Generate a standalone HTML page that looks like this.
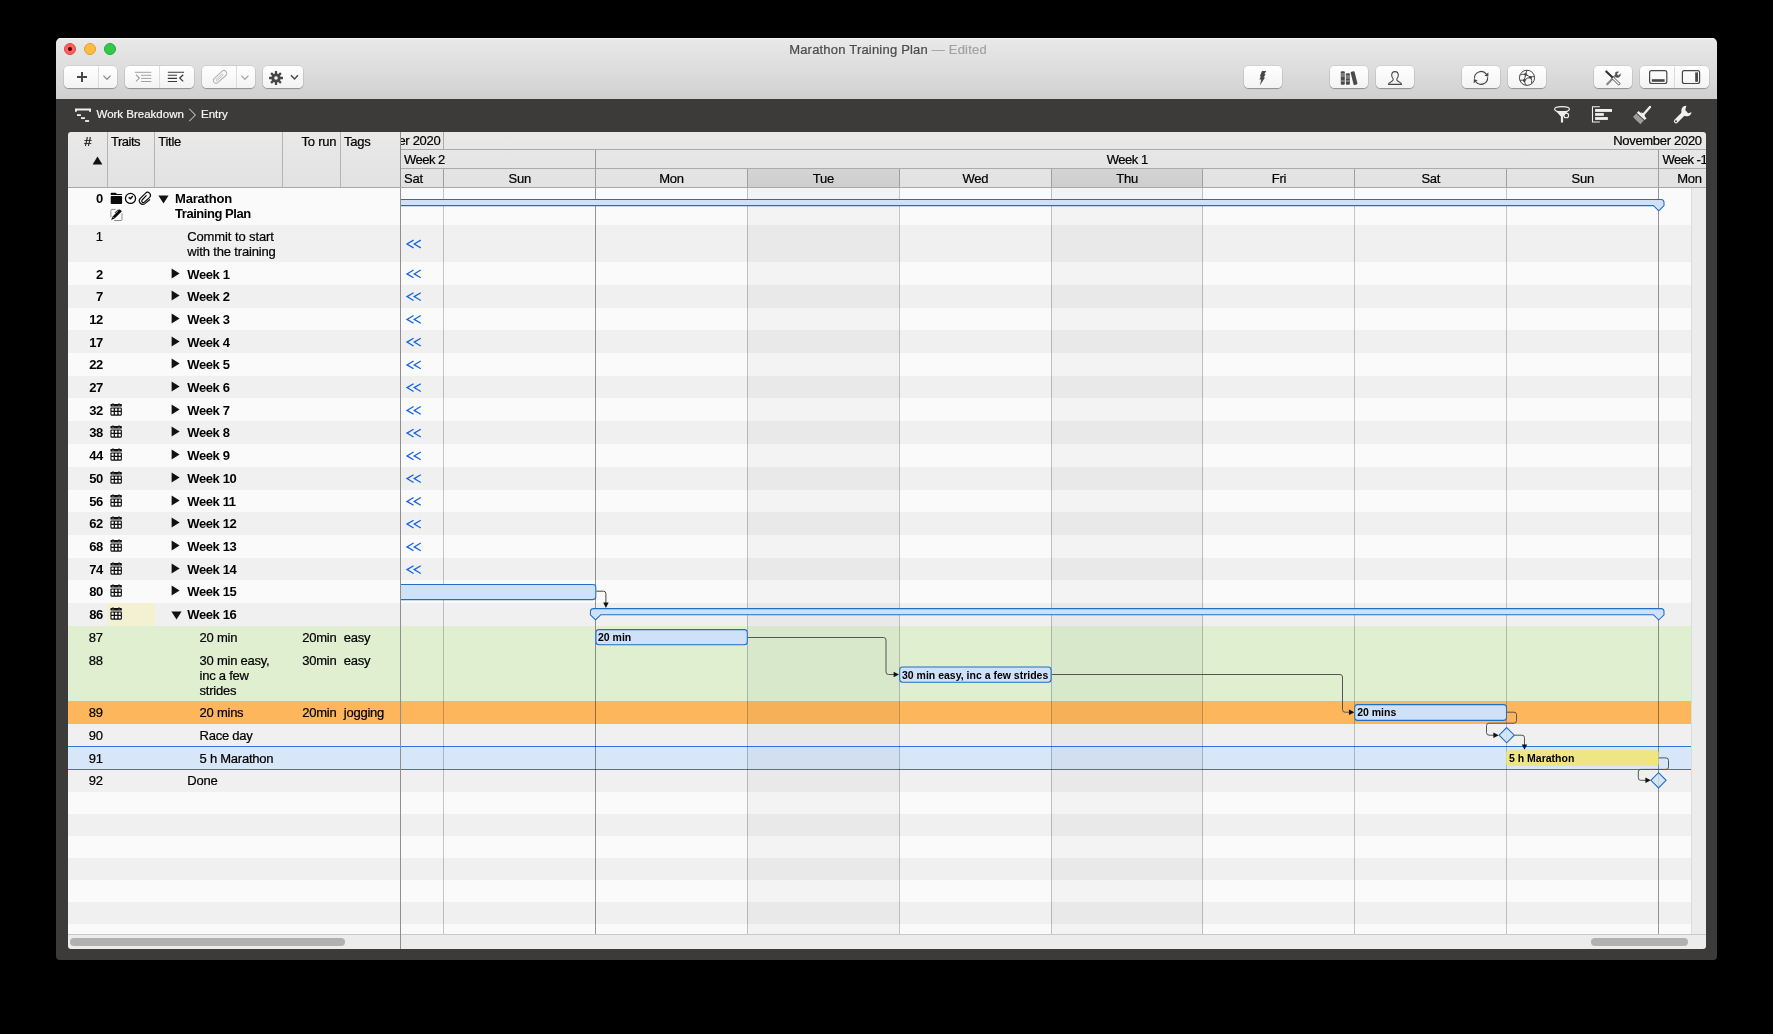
<!DOCTYPE html>
<html><head><meta charset="utf-8"><title>Marathon Training Plan</title>
<style>
html,body{margin:0;padding:0;background:#000;}
body{width:1773px;height:1034px;overflow:hidden;position:relative;font-family:"Liberation Sans",sans-serif;}
.b,.t{position:absolute;}
.t{white-space:nowrap;-webkit-text-stroke:0.22px;}
#win{left:56px;top:38px;width:1661px;height:922px;background:#3c3b3a;border-radius:5px 5px 4px 4px;overflow:hidden;}
#tbar{left:0;top:0;width:1661px;height:61px;background:linear-gradient(#e9e9e9 0%,#e1e1e1 35%,#d0d0d0 100%);box-shadow:inset 0 1px 0 #f4f4f4;}
.btn{top:66px;height:22px;background:linear-gradient(#ffffff,#f3f3f3);border-radius:4.5px;box-shadow:0 0 0 0.5px rgba(0,0,0,0.12),0 1px 1px rgba(0,0,0,0.28);}
.sep{top:66px;width:1px;height:22px;background:#dcdcdc;}
.light{top:43px;width:12px;height:12px;border-radius:50%;box-sizing:border-box;}
</style></head><body>
<div id="root" style="position:absolute;left:0;top:0;width:1773px;height:1034px;will-change:transform">
<div id="win" class="b"><div id="tbar" class="b"></div></div>
<!-- traffic lights -->
<div class="b light" style="left:64px;background:#fc615d;border:0.5px solid #e0443e;"><div class="b" style="left:3.2px;top:3.2px;width:4px;height:4px;border-radius:50%;background:#4d0000"></div></div>
<div class="b light" style="left:84px;background:#fdbc40;border:0.5px solid #dea034;"></div>
<div class="b light" style="left:104px;background:#34c84a;border:0.5px solid #27aa35;"></div>
<!-- title -->
<div class="t" style="left:588px;width:600px;text-align:center;top:42px;font-size:13px;line-height:15px;color:#4c4c4c;letter-spacing:0.2px;">Marathon Training Plan <span style="color:#a3a3a3">— Edited</span></div>
<!-- toolbar buttons -->
<div class="b btn" style="left:64px;width:53px"></div><div class="b sep" style="left:98px"></div>
<div class="b btn" style="left:125px;width:69px"></div><div class="b sep" style="left:159px"></div>
<div class="b btn" style="left:202px;width:53px"></div><div class="b sep" style="left:236px"></div>
<div class="b btn" style="left:263px;width:40px"></div>
<div class="b btn" style="left:1244px;width:38px"></div>
<div class="b btn" style="left:1330px;width:38px"></div>
<div class="b btn" style="left:1376px;width:38px"></div>
<div class="b btn" style="left:1462px;width:38px"></div>
<div class="b btn" style="left:1508px;width:38px"></div>
<div class="b btn" style="left:1594px;width:38px"></div>
<div class="b btn" style="left:1640px;width:69px"></div><div class="b sep" style="left:1674px"></div>
<!-- toolbar icons (one svg, page coords) -->
<svg class="b" style="left:56px;top:60px" width="1661" height="34" viewBox="56 60 1661 34">
 <!-- plus -->
 <path d="M77 76.9H87M82 71.9V81.9" stroke="#464646" stroke-width="2" fill="none"/>
 <path d="M103.400 75.600L107 79.300L110.600 75.600" stroke="#8e8e8e" stroke-width="1.300" fill="none"/>
 <!-- indent -->
 <g stroke="#a2a2a2" stroke-width="1" fill="none"><path d="M135 72.3H151.3M141 75.3H151.3M141 78.4H151.3M141 81.5H151.3"/><path d="M136 74.8L139.4 78.1L136 81.4" stroke-width="1.2"/></g>
 <!-- outdent -->
 <g stroke="#3a3a3a" stroke-width="1.1" fill="none"><path d="M167.8 72.3H184M167.8 75.3H177M167.8 78.4H177M167.8 81.5H177"/><path d="M183.2 74.8L179.8 78.1L183.2 81.4" stroke-width="1.3"/></g>
 <!-- link -->
 <g transform="translate(220 76.900) rotate(-42)" stroke="#b4b4b4" fill="none"><rect x="-8" y="-2.800" width="16" height="5.600" rx="2.800" stroke-width="1.100"/><rect x="-5.200" y="-0.800" width="9" height="1.600" rx="0.800" stroke-width="0.800"/></g>
 <path d="M241.300 75.600L244.900 79.300L248.500 75.600" stroke="#a6a6a6" stroke-width="1.300" fill="none"/>
 <!-- gear -->
 <g transform="translate(276 78)" fill="#474747"><rect x="-1.150" y="-7" width="2.300" height="14" rx="0.500"/><rect x="-1.150" y="-7" width="2.300" height="14" rx="0.500" transform="rotate(45)"/><rect x="-1.150" y="-7" width="2.300" height="14" rx="0.500" transform="rotate(90)"/><rect x="-1.150" y="-7" width="2.300" height="14" rx="0.500" transform="rotate(135)"/><circle r="4.600"/><circle r="1.800" fill="#f8f8f8"/></g>
 <path d="M291 75.300L294.500 78.900L298 75.300" stroke="#444" stroke-width="1.400" fill="none"/>
 <!-- lightning -->
 <path d="M1262 71.100H1266.200L1264.300 74.300H1265.700L1263.600 77.400H1265L1259.800 85.500L1261.300 79.600H1259.400L1260.900 76.200H1259.800Z" fill="#474747"/>
 <!-- books -->
 <g fill="#4a4a4a"><rect x="1340.8" y="71.2" width="4" height="13.6" rx="1"/><rect x="1345.9" y="73.2" width="4" height="11.6" rx="1"/><rect x="1352" y="71.4" width="4" height="13.6" rx="1" transform="rotate(-14 1354 78)"/></g>
 <g stroke="#c9c9c9" stroke-width="0.8"><path d="M1340.8 74H1344.8M1340.8 76H1344.8M1340.8 81H1344.8M1345.9 76H1349.9M1345.9 78H1349.9M1345.9 81H1349.9"/></g>
 <!-- person -->
 <path d="M1395 71.6c2 0 3.3 1.6 3.3 3.7c0 1.6-.7 2.8-1.5 3.6c-.3 1.2.2 1.8 1.6 2.5c1.700.8 3.200 1.500 3.200 3.000H1388.4c0-1.500 1.500-2.200 3.200-3.000c1.400-.7 1.900-1.300 1.600-2.500c-.8-.8-1.500-2-1.500-3.600c0-2.100 1.300-3.700 3.300-3.700z" fill="none" stroke="#474747" stroke-width="1.1" stroke-linejoin="round"/>
 <!-- refresh -->
 <g fill="none" stroke="#474747" stroke-width="1.100"><path d="M1474.500 78.600A6.600 6.600 0 0 1 1486.400 74.200"/><path d="M1487.600 77.200A6.600 6.600 0 0 1 1475.700 81.600"/></g>
 <path d="M1488.400 72.600L1488.300 76.800L1484.500 75.600Z M1473.700 83.200L1473.800 79L1477.600 80.200Z" fill="#474747"/>
 <!-- network -->
 <g fill="none" stroke="#474747" stroke-width="1"><circle cx="1527" cy="77.800" r="7.600"/><path d="M1525.700 74.400L1530.600 77.400M1525.700 74.400L1524.300 80.500M1530.600 77.400Q1526.800 77.600 1524.300 80.500"/><path d="M1525.700 74.400Q1525.800 71.800 1527.400 70.300M1525.700 74.400Q1522.600 73.800 1520.400 75M1530.600 77.400Q1533 76.200 1534.400 76.800M1530.600 77.400Q1532.400 80.600 1531.600 83.600M1524.300 80.500Q1524.600 83.400 1526.200 85.200M1524.300 80.500Q1522 79.800 1520 80.400"/></g>
 <g fill="#474747"><circle cx="1525.700" cy="74.400" r="1.450"/><circle cx="1530.600" cy="77.400" r="1.450"/><circle cx="1524.300" cy="80.500" r="1.450"/></g>
 <!-- tools -->
 <path d="M1607.200 84.300L1615.600 75.400" stroke="#8a8a8a" stroke-width="2.200" stroke-linecap="round"/>
 <path d="M1615.400 72.300a3.200 3.200 0 0 1 3.600 -0.500l-2.100 2.100l1.500 1.500l2.100 -2.100a3.200 3.200 0 0 1 -4.300 4.100l-1.300 -1.300z" fill="#555"/>
 <path d="M1606.300 71.400L1612.600 77.600" stroke="#2e2e2e" stroke-width="2.100" stroke-linecap="round"/>
 <path d="M1613.200 76.800L1620.200 83.600L1618.700 85.100L1611.700 78.300Z" fill="#fbfbfb" stroke="#3a3a3a" stroke-width="0.900" stroke-linejoin="round"/>
 <!-- panels -->
 <g fill="none" stroke="#474747" stroke-width="1.200"><rect x="1649.600" y="70.700" width="17.200" height="12.800" rx="2"/><rect x="1682.400" y="70.700" width="17.200" height="12.800" rx="2"/></g>
 <rect x="1651.800" y="79.200" width="12.800" height="2.600" fill="#474747"/><rect x="1695.200" y="72.400" width="2.800" height="9.400" fill="#474747"/>
</svg>
<!-- breadcrumb bar -->
<svg class="b" style="left:74px;top:106px" width="20" height="18" viewBox="74 106 20 18">
 <path d="M75 108.400H91V111.400L89.700 112.300L88.800 110.600H77.200L76.300 112.300L75 111.400Z" fill="#f0f0f0"/>
 <g fill="#f0f0f0"><rect x="77" y="114.200" width="3.900" height="1.800"/><rect x="81" y="117.200" width="3.900" height="1.800"/><rect x="85.100" y="120.100" width="4" height="1.800"/></g>
</svg>
<div class="t" style="left:96.5px;top:107px;font-size:11.5px;line-height:14px;color:#f6f6f6;">Work Breakdown</div>
<svg class="b" style="left:187px;top:107px" width="10" height="16" viewBox="187 107 10 16"><path d="M189.300 108.800L195.400 115L189.300 121.200" stroke="#e6e6e6" stroke-width="1" fill="none"/></svg>
<div class="t" style="left:201px;top:107px;font-size:11.5px;line-height:14px;color:#f6f6f6;">Entry</div>
<svg class="b" style="left:1550px;top:104px" width="150" height="22" viewBox="1550 104 150 22">
 <!-- funnel -->
 <path d="M1554.700 109.800L1560.900 116.600V122.600H1563.100V116.600L1569.300 109.800Q1562 113.200 1554.700 109.800Z" fill="#ececec"/>
 <ellipse cx="1562" cy="109.200" rx="7.400" ry="2.500" fill="#3c3b3a" stroke="#f0f0f0" stroke-width="1.200"/>
 <circle cx="1566.300" cy="115.400" r="2.300" fill="none" stroke="#f0f0f0" stroke-width="1.100"/>
 <path d="M1558 112.600L1561.200 116.600V122H1562.800V116.600L1566 112.600Z" fill="#ececec"/>
 <!-- gantt -->
 <path d="M1599.800 106.700H1592.500V122H1599.800" fill="none" stroke="#f2f2f2" stroke-width="1.100"/>
 <g fill="#f2f2f2"><rect x="1595.100" y="109" width="16.900" height="2.900"/><rect x="1595.100" y="113.100" width="8.700" height="2.700"/><rect x="1595.100" y="117.100" width="12.800" height="2.800"/></g>
 <!-- brush -->
 <path d="M1650 106.900L1643.400 114.600" stroke="#f0f0f0" stroke-width="2.300" stroke-linecap="round"/>
 <path d="M1638.600 111L1646.600 118.200L1644.600 120L1636.800 112.800Z" fill="#f0f0f0"/>
 <path d="M1640.600 112.200L1643.400 113.200L1645.200 116.400L1643.600 117.400Z" fill="#f0f0f0"/>
 <path d="M1636.200 113.600L1643.800 120.600L1640.400 124.200L1638.400 122.200L1637.200 121.200L1633 117Z" fill="#9c9c9c"/>
 <!-- wrench -->
 <path d="M1676 121.200L1684.600 112.600" stroke="#f0f0f0" stroke-width="4.200" stroke-linecap="round"/>
 <path d="M1686.400 105.800a5.200 5.200 0 1 0 5.200 6.400l-3.400 1l-3 -3z" fill="#f0f0f0"/>
 <circle cx="1676" cy="121.200" r="1" fill="#3c3b3a"/>
</svg>
<div id="table">
<div class="b row" style="left:68.00px;top:188.00px;width:1623.00px;height:37.00px;background:#fafafa;"></div>
<div class="b row" style="left:68.00px;top:225.00px;width:1623.00px;height:37.00px;background:#f0f0f0;"></div>
<div class="b row" style="left:68.00px;top:262.00px;width:1623.00px;height:23.00px;background:#fafafa;"></div>
<div class="b row" style="left:68.00px;top:285.00px;width:1623.00px;height:23.00px;background:#f0f0f0;"></div>
<div class="b row" style="left:68.00px;top:308.00px;width:1623.00px;height:22.00px;background:#fafafa;"></div>
<div class="b row" style="left:68.00px;top:330.00px;width:1623.00px;height:23.00px;background:#f0f0f0;"></div>
<div class="b row" style="left:68.00px;top:353.00px;width:1623.00px;height:23.00px;background:#fafafa;"></div>
<div class="b row" style="left:68.00px;top:376.00px;width:1623.00px;height:22.00px;background:#f0f0f0;"></div>
<div class="b row" style="left:68.00px;top:398.00px;width:1623.00px;height:23.00px;background:#fafafa;"></div>
<div class="b row" style="left:68.00px;top:421.00px;width:1623.00px;height:23.00px;background:#f0f0f0;"></div>
<div class="b row" style="left:68.00px;top:444.00px;width:1623.00px;height:23.00px;background:#fafafa;"></div>
<div class="b row" style="left:68.00px;top:467.00px;width:1623.00px;height:23.00px;background:#f0f0f0;"></div>
<div class="b row" style="left:68.00px;top:490.00px;width:1623.00px;height:22.00px;background:#fafafa;"></div>
<div class="b row" style="left:68.00px;top:512.00px;width:1623.00px;height:23.00px;background:#f0f0f0;"></div>
<div class="b row" style="left:68.00px;top:535.00px;width:1623.00px;height:23.00px;background:#fafafa;"></div>
<div class="b row" style="left:68.00px;top:558.00px;width:1623.00px;height:22.00px;background:#f0f0f0;"></div>
<div class="b row" style="left:68.00px;top:580.00px;width:1623.00px;height:23.00px;background:#fafafa;"></div>
<div class="b row" style="left:68.00px;top:603.00px;width:1623.00px;height:23.00px;background:#f0f0f0;"></div>
<div class="b row" style="left:68.00px;top:626.00px;width:1623.00px;height:23.00px;background:#dfefd0;"></div>
<div class="b row" style="left:68.00px;top:649.00px;width:1623.00px;height:52.00px;background:#dfefd0;"></div>
<div class="b row" style="left:68.00px;top:701.00px;width:1623.00px;height:23.00px;background:#fdb65b;"></div>
<div class="b row" style="left:68.00px;top:724.00px;width:1623.00px;height:22.00px;background:#f0f0f0;"></div>
<div class="b row" style="left:68.00px;top:746.00px;width:1623.00px;height:23.00px;background:#d7e6f8;"></div>
<div class="b row" style="left:68.00px;top:769.00px;width:1623.00px;height:23.00px;background:#f0f0f0;"></div>
<div class="b row" style="left:68.00px;top:792.00px;width:1623.00px;height:22.00px;background:#fafafa;"></div>
<div class="b row" style="left:68.00px;top:814.00px;width:1623.00px;height:22.00px;background:#f0f0f0;"></div>
<div class="b row" style="left:68.00px;top:836.00px;width:1623.00px;height:22.00px;background:#fafafa;"></div>
<div class="b row" style="left:68.00px;top:858.00px;width:1623.00px;height:22.00px;background:#f0f0f0;"></div>
<div class="b row" style="left:68.00px;top:880.00px;width:1623.00px;height:22.00px;background:#fafafa;"></div>
<div class="b row" style="left:68.00px;top:902.00px;width:1623.00px;height:22.00px;background:#f0f0f0;"></div>
<div class="b row" style="left:68.00px;top:924.00px;width:1623.00px;height:10.00px;background:#fafafa;"></div>
<div class="b " style="left:107.00px;top:603.00px;width:48.00px;height:23.00px;background:#f4f1d2;"></div>
<div class="b " style="left:747.00px;top:188.00px;width:152.00px;height:746.00px;background:rgba(0,0,0,0.028);"></div>
<div class="b " style="left:1051.00px;top:188.00px;width:152.00px;height:746.00px;background:rgba(0,0,0,0.028);"></div>
<div class="b " style="left:68.00px;top:745.50px;width:1623.00px;height:1.50px;background:#2b78df;"></div>
<div class="b " style="left:68.00px;top:768.50px;width:1623.00px;height:1.50px;background:#2b78df;"></div>
<div class="b " style="left:443.00px;top:188.00px;width:1.00px;height:746.00px;background:rgba(0,0,0,0.21);"></div>
<div class="b " style="left:595.00px;top:188.00px;width:1.00px;height:746.00px;background:rgba(0,0,0,0.40);"></div>
<div class="b " style="left:747.00px;top:188.00px;width:1.00px;height:746.00px;background:rgba(0,0,0,0.21);"></div>
<div class="b " style="left:899.00px;top:188.00px;width:1.00px;height:746.00px;background:rgba(0,0,0,0.21);"></div>
<div class="b " style="left:1051.00px;top:188.00px;width:1.00px;height:746.00px;background:rgba(0,0,0,0.21);"></div>
<div class="b " style="left:1202.00px;top:188.00px;width:1.00px;height:746.00px;background:rgba(0,0,0,0.21);"></div>
<div class="b " style="left:1354.00px;top:188.00px;width:1.00px;height:746.00px;background:rgba(0,0,0,0.21);"></div>
<div class="b " style="left:1506.00px;top:188.00px;width:1.00px;height:746.00px;background:rgba(0,0,0,0.21);"></div>
<div class="b " style="left:1658.00px;top:188.00px;width:1.00px;height:746.00px;background:rgba(0,0,0,0.40);"></div>
<div class="b " style="left:1691.00px;top:188.00px;width:15.00px;height:747.00px;background:#ececec;border-left:1px solid #dcdcdc;box-sizing:border-box;"></div>
<div class="b " style="left:68.00px;top:934.00px;width:1638.00px;height:15.00px;background:#ececec;border-top:1px solid #c9c9c9;box-sizing:border-box;border-radius:0 0 3px 3px;"></div>
<div class="b " style="left:70.00px;top:938.00px;width:275.00px;height:8.00px;background:#b1b1b1;border-radius:4px;"></div>
<div class="b " style="left:1591.00px;top:938.00px;width:97.00px;height:8.00px;background:#b1b1b1;border-radius:4px;"></div>
<div class="b " style="left:400.00px;top:132.00px;width:1.00px;height:817.00px;background:#8f8f8f;"></div>
<div class="b hdr" style="left:68.00px;top:132.00px;width:1638.00px;height:55.00px;background:linear-gradient(#e9e9e9,#e2e2e2);border-radius:3px 3px 0 0;"></div>
<div class="b " style="left:68.00px;top:186.50px;width:1638.00px;height:1.50px;background:#a9a9a9;"></div>
<div class="b " style="left:107.00px;top:132.00px;width:1.00px;height:55.00px;background:#b4b4b4;"></div>
<div class="b " style="left:154.00px;top:132.00px;width:1.00px;height:55.00px;background:#b4b4b4;"></div>
<div class="b " style="left:282.00px;top:132.00px;width:1.00px;height:55.00px;background:#b4b4b4;"></div>
<div class="b " style="left:340.00px;top:132.00px;width:1.00px;height:55.00px;background:#b4b4b4;"></div>
<div class="b " style="left:400.00px;top:132.00px;width:1.00px;height:55.00px;background:#8f8f8f;"></div>
<div class="t " style="top:134px;font-size:13px;line-height:15px;color:#000;letter-spacing:-0.25px;left:84.20px;">#</div>
<div class="t " style="top:134px;font-size:13px;line-height:15px;color:#000;letter-spacing:-0.5px;left:111.00px;">Traits</div>
<div class="t " style="top:134px;font-size:13px;line-height:15px;color:#000;letter-spacing:-0.25px;left:158.20px;">Title</div>
<div class="t " style="top:134px;font-size:13px;line-height:15px;color:#000;letter-spacing:-0.25px;left:-63.75px;width:400px;text-align:right;">To run</div>
<div class="t " style="top:134px;font-size:13px;line-height:15px;color:#000;letter-spacing:-0.25px;left:344.00px;">Tags</div>
<svg class="b" style="left:92px;top:156px" width="11" height="9" viewBox="0 0 11 9"><path d="M5.5 0.5 L10.4 8.5 L0.6 8.5 Z" fill="#111"/></svg>
<div class="b " style="left:747.00px;top:169.00px;width:152.00px;height:18.00px;background:linear-gradient(#d4d4d4,#cecece);"></div>
<div class="b " style="left:1051.00px;top:169.00px;width:152.00px;height:18.00px;background:linear-gradient(#d4d4d4,#cecece);"></div>
<div class="b " style="left:401.00px;top:149.00px;width:1305.00px;height:1.00px;background:#ababab;"></div>
<div class="b " style="left:401.00px;top:168.00px;width:1305.00px;height:1.00px;background:#ababab;"></div>
<div class="b " style="left:443.00px;top:132.00px;width:1.00px;height:18.00px;background:#ababab;"></div>
<div class="b " style="left:595.00px;top:150.00px;width:1.00px;height:37.00px;background:#9a9a9a;"></div>
<div class="b " style="left:1658.00px;top:150.00px;width:1.00px;height:37.00px;background:#9a9a9a;"></div>
<div class="b " style="left:443.00px;top:169.00px;width:1.00px;height:18.00px;background:#9f9f9f;"></div>
<div class="b " style="left:595.00px;top:169.00px;width:1.00px;height:18.00px;background:#9f9f9f;"></div>
<div class="b " style="left:747.00px;top:169.00px;width:1.00px;height:18.00px;background:#9f9f9f;"></div>
<div class="b " style="left:899.00px;top:169.00px;width:1.00px;height:18.00px;background:#9f9f9f;"></div>
<div class="b " style="left:1051.00px;top:169.00px;width:1.00px;height:18.00px;background:#9f9f9f;"></div>
<div class="b " style="left:1202.00px;top:169.00px;width:1.00px;height:18.00px;background:#9f9f9f;"></div>
<div class="b " style="left:1354.00px;top:169.00px;width:1.00px;height:18.00px;background:#9f9f9f;"></div>
<div class="b " style="left:1506.00px;top:169.00px;width:1.00px;height:18.00px;background:#9f9f9f;"></div>
<div class="b " style="left:1658.00px;top:169.00px;width:1.00px;height:18.00px;background:#9f9f9f;"></div>
<div class="b" style="left:401px;top:132px;width:42px;height:17px;overflow:hidden"><div class="t" style="right:2.6px;top:1px;font-size:13px;line-height:15px;color:#000;letter-spacing:-0.3px">October 2020</div></div>
<div class="t " style="top:133px;font-size:13px;line-height:15px;color:#000;letter-spacing:-0.3px;left:1301.80px;width:400px;text-align:right;">November 2020</div>
<div class="t " style="top:152px;font-size:13px;line-height:15px;color:#000;letter-spacing:-0.5px;left:404.00px;">Week 2</div>
<div class="t " style="top:152px;font-size:13px;line-height:15px;color:#000;letter-spacing:-0.5px;left:927.25px;width:400px;text-align:center;">Week 1</div>
<div class="b" style="left:1659px;top:150px;width:47px;height:37px;overflow:hidden">
<div class="t" style="left:3.5px;top:2px;font-size:13px;line-height:15px;color:#000;letter-spacing:-0.5px">Week -1</div>
</div>
<div class="t " style="top:171px;font-size:13px;line-height:15px;color:#000;letter-spacing:-0.25px;left:404.00px;">Sat</div>
<div class="t " style="top:171px;font-size:13px;line-height:15px;color:#000;letter-spacing:-0.25px;left:319.70px;width:400px;text-align:center;">Sun</div>
<div class="t " style="top:171px;font-size:13px;line-height:15px;color:#000;letter-spacing:-0.25px;left:471.55px;width:400px;text-align:center;">Mon</div>
<div class="t " style="top:171px;font-size:13px;line-height:15px;color:#000;letter-spacing:-0.25px;left:623.41px;width:400px;text-align:center;">Tue</div>
<div class="t " style="top:171px;font-size:13px;line-height:15px;color:#000;letter-spacing:-0.25px;left:775.27px;width:400px;text-align:center;">Wed</div>
<div class="t " style="top:171px;font-size:13px;line-height:15px;color:#000;letter-spacing:-0.25px;left:927.12px;width:400px;text-align:center;">Thu</div>
<div class="t " style="top:171px;font-size:13px;line-height:15px;color:#000;letter-spacing:-0.25px;left:1078.98px;width:400px;text-align:center;">Fri</div>
<div class="t " style="top:171px;font-size:13px;line-height:15px;color:#000;letter-spacing:-0.25px;left:1230.84px;width:400px;text-align:center;">Sat</div>
<div class="t " style="top:171px;font-size:13px;line-height:15px;color:#000;letter-spacing:-0.25px;left:1382.70px;width:400px;text-align:center;">Sun</div>
<div class="t " style="top:171px;font-size:13px;line-height:15px;color:#000;letter-spacing:-0.25px;left:1301.75px;width:400px;text-align:right;">Mon</div>
<div class="t " style="top:191px;font-size:13px;line-height:15px;color:#000;letter-spacing:-0.4px;font-weight:bold;-webkit-text-stroke:0;left:-297.20px;width:400px;text-align:right;">0</div>
<svg class="b" style="left:158.0px;top:194.5px" width="11" height="9" viewBox="0 0 11 9"><path d="M0.4 0.6 L10.6 0.6 L5.5 8.4 Z" fill="#111"/></svg>
<div class="t " style="top:191px;font-size:13px;line-height:15px;color:#000;letter-spacing:-0.2px;font-weight:bold;-webkit-text-stroke:0;left:175.00px;">Marathon</div>
<div class="t " style="top:206px;font-size:13px;line-height:15px;color:#000;letter-spacing:-0.45px;font-weight:bold;-webkit-text-stroke:0;left:175.00px;">Training Plan</div>
<div class="t " style="top:229px;font-size:13px;line-height:15px;color:#000;letter-spacing:-0.25px;left:-297.35px;width:400px;text-align:right;">1</div>
<div class="t " style="top:229px;font-size:13px;line-height:15px;color:#000;letter-spacing:-0.1px;left:187.20px;">Commit to start</div>
<div class="t " style="top:244px;font-size:13px;line-height:15px;color:#000;letter-spacing:-0.15px;left:187.20px;">with the training</div>
<div class="t " style="top:267px;font-size:13px;line-height:15px;color:#000;letter-spacing:-0.4px;font-weight:bold;-webkit-text-stroke:0;left:-297.20px;width:400px;text-align:right;">2</div>
<svg class="b" style="left:171.4px;top:267.9px" width="9" height="11" viewBox="0 0 9 11"><path d="M0.6 0.4 L8.6 5.5 L0.6 10.6 Z" fill="#111"/></svg>
<div class="t " style="top:267px;font-size:13px;line-height:15px;color:#000;letter-spacing:-0.4px;font-weight:bold;-webkit-text-stroke:0;left:187.30px;">Week 1</div>
<div class="t " style="top:289px;font-size:13px;line-height:15px;color:#000;letter-spacing:-0.4px;font-weight:bold;-webkit-text-stroke:0;left:-297.20px;width:400px;text-align:right;">7</div>
<svg class="b" style="left:171.4px;top:289.9px" width="9" height="11" viewBox="0 0 9 11"><path d="M0.6 0.4 L8.6 5.5 L0.6 10.6 Z" fill="#111"/></svg>
<div class="t " style="top:289px;font-size:13px;line-height:15px;color:#000;letter-spacing:-0.4px;font-weight:bold;-webkit-text-stroke:0;left:187.30px;">Week 2</div>
<div class="t " style="top:312px;font-size:13px;line-height:15px;color:#000;letter-spacing:-0.4px;font-weight:bold;-webkit-text-stroke:0;left:-297.20px;width:400px;text-align:right;">12</div>
<svg class="b" style="left:171.4px;top:312.9px" width="9" height="11" viewBox="0 0 9 11"><path d="M0.6 0.4 L8.6 5.5 L0.6 10.6 Z" fill="#111"/></svg>
<div class="t " style="top:312px;font-size:13px;line-height:15px;color:#000;letter-spacing:-0.4px;font-weight:bold;-webkit-text-stroke:0;left:187.30px;">Week 3</div>
<div class="t " style="top:335px;font-size:13px;line-height:15px;color:#000;letter-spacing:-0.4px;font-weight:bold;-webkit-text-stroke:0;left:-297.20px;width:400px;text-align:right;">17</div>
<svg class="b" style="left:171.4px;top:335.9px" width="9" height="11" viewBox="0 0 9 11"><path d="M0.6 0.4 L8.6 5.5 L0.6 10.6 Z" fill="#111"/></svg>
<div class="t " style="top:335px;font-size:13px;line-height:15px;color:#000;letter-spacing:-0.4px;font-weight:bold;-webkit-text-stroke:0;left:187.30px;">Week 4</div>
<div class="t " style="top:357px;font-size:13px;line-height:15px;color:#000;letter-spacing:-0.4px;font-weight:bold;-webkit-text-stroke:0;left:-297.20px;width:400px;text-align:right;">22</div>
<svg class="b" style="left:171.4px;top:357.9px" width="9" height="11" viewBox="0 0 9 11"><path d="M0.6 0.4 L8.6 5.5 L0.6 10.6 Z" fill="#111"/></svg>
<div class="t " style="top:357px;font-size:13px;line-height:15px;color:#000;letter-spacing:-0.4px;font-weight:bold;-webkit-text-stroke:0;left:187.30px;">Week 5</div>
<div class="t " style="top:380px;font-size:13px;line-height:15px;color:#000;letter-spacing:-0.4px;font-weight:bold;-webkit-text-stroke:0;left:-297.20px;width:400px;text-align:right;">27</div>
<svg class="b" style="left:171.4px;top:380.9px" width="9" height="11" viewBox="0 0 9 11"><path d="M0.6 0.4 L8.6 5.5 L0.6 10.6 Z" fill="#111"/></svg>
<div class="t " style="top:380px;font-size:13px;line-height:15px;color:#000;letter-spacing:-0.4px;font-weight:bold;-webkit-text-stroke:0;left:187.30px;">Week 6</div>
<div class="t " style="top:403px;font-size:13px;line-height:15px;color:#000;letter-spacing:-0.4px;font-weight:bold;-webkit-text-stroke:0;left:-297.20px;width:400px;text-align:right;">32</div>
<svg class="b" style="left:171.4px;top:403.9px" width="9" height="11" viewBox="0 0 9 11"><path d="M0.6 0.4 L8.6 5.5 L0.6 10.6 Z" fill="#111"/></svg>
<div class="t " style="top:403px;font-size:13px;line-height:15px;color:#000;letter-spacing:-0.4px;font-weight:bold;-webkit-text-stroke:0;left:187.30px;">Week 7</div>
<svg class="b" style="left:110.4px;top:403.1px" width="12.4" height="13.6" viewBox="0 0 12.4 13.6"><rect x="0.4" y="0.9" width="11.5" height="2.7" rx="0.9" fill="#111"/><circle cx="3" cy="0.9" r="0.75" fill="#111"/><circle cx="9.1" cy="0.9" r="0.75" fill="#111"/><circle cx="3" cy="2.3" r="0.55" fill="#aaa"/><circle cx="9.1" cy="2.3" r="0.55" fill="#aaa"/><rect x="0.4" y="4.5" width="11.5" height="8.2" rx="1.1" fill="#111"/><g fill="#fff"><rect x="1.5" y="5.5" width="2.2" height="2.2" rx="0.4"/><rect x="5" y="5.5" width="2.3" height="2.2" rx="0.4"/><rect x="8.6" y="5.5" width="2.2" height="2.2" rx="0.4"/><rect x="1.5" y="9" width="2.2" height="2.5" rx="0.4"/><rect x="5" y="9" width="2.3" height="2.5" rx="0.4"/><rect x="8.6" y="9" width="2.2" height="2.5" rx="0.4"/></g></svg>
<div class="t " style="top:425px;font-size:13px;line-height:15px;color:#000;letter-spacing:-0.4px;font-weight:bold;-webkit-text-stroke:0;left:-297.20px;width:400px;text-align:right;">38</div>
<svg class="b" style="left:171.4px;top:425.9px" width="9" height="11" viewBox="0 0 9 11"><path d="M0.6 0.4 L8.6 5.5 L0.6 10.6 Z" fill="#111"/></svg>
<div class="t " style="top:425px;font-size:13px;line-height:15px;color:#000;letter-spacing:-0.4px;font-weight:bold;-webkit-text-stroke:0;left:187.30px;">Week 8</div>
<svg class="b" style="left:110.4px;top:425.1px" width="12.4" height="13.6" viewBox="0 0 12.4 13.6"><rect x="0.4" y="0.9" width="11.5" height="2.7" rx="0.9" fill="#111"/><circle cx="3" cy="0.9" r="0.75" fill="#111"/><circle cx="9.1" cy="0.9" r="0.75" fill="#111"/><circle cx="3" cy="2.3" r="0.55" fill="#aaa"/><circle cx="9.1" cy="2.3" r="0.55" fill="#aaa"/><rect x="0.4" y="4.5" width="11.5" height="8.2" rx="1.1" fill="#111"/><g fill="#fff"><rect x="1.5" y="5.5" width="2.2" height="2.2" rx="0.4"/><rect x="5" y="5.5" width="2.3" height="2.2" rx="0.4"/><rect x="8.6" y="5.5" width="2.2" height="2.2" rx="0.4"/><rect x="1.5" y="9" width="2.2" height="2.5" rx="0.4"/><rect x="5" y="9" width="2.3" height="2.5" rx="0.4"/><rect x="8.6" y="9" width="2.2" height="2.5" rx="0.4"/></g></svg>
<div class="t " style="top:448px;font-size:13px;line-height:15px;color:#000;letter-spacing:-0.4px;font-weight:bold;-webkit-text-stroke:0;left:-297.20px;width:400px;text-align:right;">44</div>
<svg class="b" style="left:171.4px;top:448.9px" width="9" height="11" viewBox="0 0 9 11"><path d="M0.6 0.4 L8.6 5.5 L0.6 10.6 Z" fill="#111"/></svg>
<div class="t " style="top:448px;font-size:13px;line-height:15px;color:#000;letter-spacing:-0.4px;font-weight:bold;-webkit-text-stroke:0;left:187.30px;">Week 9</div>
<svg class="b" style="left:110.4px;top:448.1px" width="12.4" height="13.6" viewBox="0 0 12.4 13.6"><rect x="0.4" y="0.9" width="11.5" height="2.7" rx="0.9" fill="#111"/><circle cx="3" cy="0.9" r="0.75" fill="#111"/><circle cx="9.1" cy="0.9" r="0.75" fill="#111"/><circle cx="3" cy="2.3" r="0.55" fill="#aaa"/><circle cx="9.1" cy="2.3" r="0.55" fill="#aaa"/><rect x="0.4" y="4.5" width="11.5" height="8.2" rx="1.1" fill="#111"/><g fill="#fff"><rect x="1.5" y="5.5" width="2.2" height="2.2" rx="0.4"/><rect x="5" y="5.5" width="2.3" height="2.2" rx="0.4"/><rect x="8.6" y="5.5" width="2.2" height="2.2" rx="0.4"/><rect x="1.5" y="9" width="2.2" height="2.5" rx="0.4"/><rect x="5" y="9" width="2.3" height="2.5" rx="0.4"/><rect x="8.6" y="9" width="2.2" height="2.5" rx="0.4"/></g></svg>
<div class="t " style="top:471px;font-size:13px;line-height:15px;color:#000;letter-spacing:-0.4px;font-weight:bold;-webkit-text-stroke:0;left:-297.20px;width:400px;text-align:right;">50</div>
<svg class="b" style="left:171.4px;top:471.9px" width="9" height="11" viewBox="0 0 9 11"><path d="M0.6 0.4 L8.6 5.5 L0.6 10.6 Z" fill="#111"/></svg>
<div class="t " style="top:471px;font-size:13px;line-height:15px;color:#000;letter-spacing:-0.4px;font-weight:bold;-webkit-text-stroke:0;left:187.30px;">Week 10</div>
<svg class="b" style="left:110.4px;top:471.1px" width="12.4" height="13.6" viewBox="0 0 12.4 13.6"><rect x="0.4" y="0.9" width="11.5" height="2.7" rx="0.9" fill="#111"/><circle cx="3" cy="0.9" r="0.75" fill="#111"/><circle cx="9.1" cy="0.9" r="0.75" fill="#111"/><circle cx="3" cy="2.3" r="0.55" fill="#aaa"/><circle cx="9.1" cy="2.3" r="0.55" fill="#aaa"/><rect x="0.4" y="4.5" width="11.5" height="8.2" rx="1.1" fill="#111"/><g fill="#fff"><rect x="1.5" y="5.5" width="2.2" height="2.2" rx="0.4"/><rect x="5" y="5.5" width="2.3" height="2.2" rx="0.4"/><rect x="8.6" y="5.5" width="2.2" height="2.2" rx="0.4"/><rect x="1.5" y="9" width="2.2" height="2.5" rx="0.4"/><rect x="5" y="9" width="2.3" height="2.5" rx="0.4"/><rect x="8.6" y="9" width="2.2" height="2.5" rx="0.4"/></g></svg>
<div class="t " style="top:494px;font-size:13px;line-height:15px;color:#000;letter-spacing:-0.4px;font-weight:bold;-webkit-text-stroke:0;left:-297.20px;width:400px;text-align:right;">56</div>
<svg class="b" style="left:171.4px;top:494.9px" width="9" height="11" viewBox="0 0 9 11"><path d="M0.6 0.4 L8.6 5.5 L0.6 10.6 Z" fill="#111"/></svg>
<div class="t " style="top:494px;font-size:13px;line-height:15px;color:#000;letter-spacing:-0.4px;font-weight:bold;-webkit-text-stroke:0;left:187.30px;">Week 11</div>
<svg class="b" style="left:110.4px;top:494.1px" width="12.4" height="13.6" viewBox="0 0 12.4 13.6"><rect x="0.4" y="0.9" width="11.5" height="2.7" rx="0.9" fill="#111"/><circle cx="3" cy="0.9" r="0.75" fill="#111"/><circle cx="9.1" cy="0.9" r="0.75" fill="#111"/><circle cx="3" cy="2.3" r="0.55" fill="#aaa"/><circle cx="9.1" cy="2.3" r="0.55" fill="#aaa"/><rect x="0.4" y="4.5" width="11.5" height="8.2" rx="1.1" fill="#111"/><g fill="#fff"><rect x="1.5" y="5.5" width="2.2" height="2.2" rx="0.4"/><rect x="5" y="5.5" width="2.3" height="2.2" rx="0.4"/><rect x="8.6" y="5.5" width="2.2" height="2.2" rx="0.4"/><rect x="1.5" y="9" width="2.2" height="2.5" rx="0.4"/><rect x="5" y="9" width="2.3" height="2.5" rx="0.4"/><rect x="8.6" y="9" width="2.2" height="2.5" rx="0.4"/></g></svg>
<div class="t " style="top:516px;font-size:13px;line-height:15px;color:#000;letter-spacing:-0.4px;font-weight:bold;-webkit-text-stroke:0;left:-297.20px;width:400px;text-align:right;">62</div>
<svg class="b" style="left:171.4px;top:516.9px" width="9" height="11" viewBox="0 0 9 11"><path d="M0.6 0.4 L8.6 5.5 L0.6 10.6 Z" fill="#111"/></svg>
<div class="t " style="top:516px;font-size:13px;line-height:15px;color:#000;letter-spacing:-0.4px;font-weight:bold;-webkit-text-stroke:0;left:187.30px;">Week 12</div>
<svg class="b" style="left:110.4px;top:516.1px" width="12.4" height="13.6" viewBox="0 0 12.4 13.6"><rect x="0.4" y="0.9" width="11.5" height="2.7" rx="0.9" fill="#111"/><circle cx="3" cy="0.9" r="0.75" fill="#111"/><circle cx="9.1" cy="0.9" r="0.75" fill="#111"/><circle cx="3" cy="2.3" r="0.55" fill="#aaa"/><circle cx="9.1" cy="2.3" r="0.55" fill="#aaa"/><rect x="0.4" y="4.5" width="11.5" height="8.2" rx="1.1" fill="#111"/><g fill="#fff"><rect x="1.5" y="5.5" width="2.2" height="2.2" rx="0.4"/><rect x="5" y="5.5" width="2.3" height="2.2" rx="0.4"/><rect x="8.6" y="5.5" width="2.2" height="2.2" rx="0.4"/><rect x="1.5" y="9" width="2.2" height="2.5" rx="0.4"/><rect x="5" y="9" width="2.3" height="2.5" rx="0.4"/><rect x="8.6" y="9" width="2.2" height="2.5" rx="0.4"/></g></svg>
<div class="t " style="top:539px;font-size:13px;line-height:15px;color:#000;letter-spacing:-0.4px;font-weight:bold;-webkit-text-stroke:0;left:-297.20px;width:400px;text-align:right;">68</div>
<svg class="b" style="left:171.4px;top:539.9px" width="9" height="11" viewBox="0 0 9 11"><path d="M0.6 0.4 L8.6 5.5 L0.6 10.6 Z" fill="#111"/></svg>
<div class="t " style="top:539px;font-size:13px;line-height:15px;color:#000;letter-spacing:-0.4px;font-weight:bold;-webkit-text-stroke:0;left:187.30px;">Week 13</div>
<svg class="b" style="left:110.4px;top:539.1px" width="12.4" height="13.6" viewBox="0 0 12.4 13.6"><rect x="0.4" y="0.9" width="11.5" height="2.7" rx="0.9" fill="#111"/><circle cx="3" cy="0.9" r="0.75" fill="#111"/><circle cx="9.1" cy="0.9" r="0.75" fill="#111"/><circle cx="3" cy="2.3" r="0.55" fill="#aaa"/><circle cx="9.1" cy="2.3" r="0.55" fill="#aaa"/><rect x="0.4" y="4.5" width="11.5" height="8.2" rx="1.1" fill="#111"/><g fill="#fff"><rect x="1.5" y="5.5" width="2.2" height="2.2" rx="0.4"/><rect x="5" y="5.5" width="2.3" height="2.2" rx="0.4"/><rect x="8.6" y="5.5" width="2.2" height="2.2" rx="0.4"/><rect x="1.5" y="9" width="2.2" height="2.5" rx="0.4"/><rect x="5" y="9" width="2.3" height="2.5" rx="0.4"/><rect x="8.6" y="9" width="2.2" height="2.5" rx="0.4"/></g></svg>
<div class="t " style="top:562px;font-size:13px;line-height:15px;color:#000;letter-spacing:-0.4px;font-weight:bold;-webkit-text-stroke:0;left:-297.20px;width:400px;text-align:right;">74</div>
<svg class="b" style="left:171.4px;top:562.9px" width="9" height="11" viewBox="0 0 9 11"><path d="M0.6 0.4 L8.6 5.5 L0.6 10.6 Z" fill="#111"/></svg>
<div class="t " style="top:562px;font-size:13px;line-height:15px;color:#000;letter-spacing:-0.4px;font-weight:bold;-webkit-text-stroke:0;left:187.30px;">Week 14</div>
<svg class="b" style="left:110.4px;top:562.1px" width="12.4" height="13.6" viewBox="0 0 12.4 13.6"><rect x="0.4" y="0.9" width="11.5" height="2.7" rx="0.9" fill="#111"/><circle cx="3" cy="0.9" r="0.75" fill="#111"/><circle cx="9.1" cy="0.9" r="0.75" fill="#111"/><circle cx="3" cy="2.3" r="0.55" fill="#aaa"/><circle cx="9.1" cy="2.3" r="0.55" fill="#aaa"/><rect x="0.4" y="4.5" width="11.5" height="8.2" rx="1.1" fill="#111"/><g fill="#fff"><rect x="1.5" y="5.5" width="2.2" height="2.2" rx="0.4"/><rect x="5" y="5.5" width="2.3" height="2.2" rx="0.4"/><rect x="8.6" y="5.5" width="2.2" height="2.2" rx="0.4"/><rect x="1.5" y="9" width="2.2" height="2.5" rx="0.4"/><rect x="5" y="9" width="2.3" height="2.5" rx="0.4"/><rect x="8.6" y="9" width="2.2" height="2.5" rx="0.4"/></g></svg>
<div class="t " style="top:584px;font-size:13px;line-height:15px;color:#000;letter-spacing:-0.4px;font-weight:bold;-webkit-text-stroke:0;left:-297.20px;width:400px;text-align:right;">80</div>
<svg class="b" style="left:171.4px;top:584.9px" width="9" height="11" viewBox="0 0 9 11"><path d="M0.6 0.4 L8.6 5.5 L0.6 10.6 Z" fill="#111"/></svg>
<div class="t " style="top:584px;font-size:13px;line-height:15px;color:#000;letter-spacing:-0.4px;font-weight:bold;-webkit-text-stroke:0;left:187.30px;">Week 15</div>
<svg class="b" style="left:110.4px;top:584.1px" width="12.4" height="13.6" viewBox="0 0 12.4 13.6"><rect x="0.4" y="0.9" width="11.5" height="2.7" rx="0.9" fill="#111"/><circle cx="3" cy="0.9" r="0.75" fill="#111"/><circle cx="9.1" cy="0.9" r="0.75" fill="#111"/><circle cx="3" cy="2.3" r="0.55" fill="#aaa"/><circle cx="9.1" cy="2.3" r="0.55" fill="#aaa"/><rect x="0.4" y="4.5" width="11.5" height="8.2" rx="1.1" fill="#111"/><g fill="#fff"><rect x="1.5" y="5.5" width="2.2" height="2.2" rx="0.4"/><rect x="5" y="5.5" width="2.3" height="2.2" rx="0.4"/><rect x="8.6" y="5.5" width="2.2" height="2.2" rx="0.4"/><rect x="1.5" y="9" width="2.2" height="2.5" rx="0.4"/><rect x="5" y="9" width="2.3" height="2.5" rx="0.4"/><rect x="8.6" y="9" width="2.2" height="2.5" rx="0.4"/></g></svg>
<div class="t " style="top:607px;font-size:13px;line-height:15px;color:#000;letter-spacing:-0.4px;font-weight:bold;-webkit-text-stroke:0;left:-297.20px;width:400px;text-align:right;">86</div>
<svg class="b" style="left:171.3px;top:610.5px" width="11" height="9" viewBox="0 0 11 9"><path d="M0.4 0.6 L10.6 0.6 L5.5 8.4 Z" fill="#111"/></svg>
<div class="t " style="top:607px;font-size:13px;line-height:15px;color:#000;letter-spacing:-0.4px;font-weight:bold;-webkit-text-stroke:0;left:187.30px;">Week 16</div>
<svg class="b" style="left:110.4px;top:607.1px" width="12.4" height="13.6" viewBox="0 0 12.4 13.6"><rect x="0.4" y="0.9" width="11.5" height="2.7" rx="0.9" fill="#111"/><circle cx="3" cy="0.9" r="0.75" fill="#111"/><circle cx="9.1" cy="0.9" r="0.75" fill="#111"/><circle cx="3" cy="2.3" r="0.55" fill="#aaa"/><circle cx="9.1" cy="2.3" r="0.55" fill="#aaa"/><rect x="0.4" y="4.5" width="11.5" height="8.2" rx="1.1" fill="#111"/><g fill="#fff"><rect x="1.5" y="5.5" width="2.2" height="2.2" rx="0.4"/><rect x="5" y="5.5" width="2.3" height="2.2" rx="0.4"/><rect x="8.6" y="5.5" width="2.2" height="2.2" rx="0.4"/><rect x="1.5" y="9" width="2.2" height="2.5" rx="0.4"/><rect x="5" y="9" width="2.3" height="2.5" rx="0.4"/><rect x="8.6" y="9" width="2.2" height="2.5" rx="0.4"/></g></svg>
<div class="t " style="top:630px;font-size:13px;line-height:15px;color:#000;letter-spacing:-0.25px;left:-297.35px;width:400px;text-align:right;">87</div>
<div class="t " style="top:630px;font-size:13px;line-height:15px;color:#000;letter-spacing:-0.25px;left:199.60px;">20 min</div>
<div class="t " style="top:630px;font-size:13px;line-height:15px;color:#000;letter-spacing:-0.25px;left:-63.55px;width:400px;text-align:right;">20min</div>
<div class="t " style="top:630px;font-size:13px;line-height:15px;color:#000;letter-spacing:-0.25px;left:343.80px;">easy</div>
<div class="t " style="top:705px;font-size:13px;line-height:15px;color:#000;letter-spacing:-0.25px;left:-297.35px;width:400px;text-align:right;">89</div>
<div class="t " style="top:705px;font-size:13px;line-height:15px;color:#000;letter-spacing:-0.25px;left:199.60px;">20 mins</div>
<div class="t " style="top:705px;font-size:13px;line-height:15px;color:#000;letter-spacing:-0.25px;left:-63.55px;width:400px;text-align:right;">20min</div>
<div class="t " style="top:705px;font-size:13px;line-height:15px;color:#000;letter-spacing:-0.25px;left:343.80px;">jogging</div>
<div class="t " style="top:728px;font-size:13px;line-height:15px;color:#000;letter-spacing:-0.25px;left:-297.35px;width:400px;text-align:right;">90</div>
<div class="t " style="top:728px;font-size:13px;line-height:15px;color:#000;letter-spacing:-0.25px;left:199.60px;">Race day</div>
<div class="t " style="top:751px;font-size:13px;line-height:15px;color:#000;letter-spacing:-0.25px;left:-297.35px;width:400px;text-align:right;">91</div>
<div class="t " style="top:751px;font-size:13px;line-height:15px;color:#000;letter-spacing:-0.25px;left:199.60px;">5 h Marathon</div>
<div class="t " style="top:773px;font-size:13px;line-height:15px;color:#000;letter-spacing:-0.25px;left:-297.35px;width:400px;text-align:right;">92</div>
<div class="t " style="top:773px;font-size:13px;line-height:15px;color:#000;letter-spacing:-0.25px;left:187.30px;">Done</div>
<div class="t " style="top:653px;font-size:13px;line-height:15px;color:#000;letter-spacing:-0.25px;left:-297.35px;width:400px;text-align:right;">88</div>
<div class="t " style="top:653px;font-size:13px;line-height:15px;color:#000;letter-spacing:-0.25px;left:199.60px;">30 min easy,</div>
<div class="t " style="top:668px;font-size:13px;line-height:15px;color:#000;letter-spacing:-0.25px;left:199.60px;">inc a few</div>
<div class="t " style="top:683px;font-size:13px;line-height:15px;color:#000;letter-spacing:-0.25px;left:199.60px;">strides</div>
<div class="t " style="top:653px;font-size:13px;line-height:15px;color:#000;letter-spacing:-0.25px;left:-63.55px;width:400px;text-align:right;">30min</div>
<div class="t " style="top:653px;font-size:13px;line-height:15px;color:#000;letter-spacing:-0.25px;left:343.80px;">easy</div>
<svg class="b" style="left:108px;top:190px" width="48" height="34" viewBox="0 0 48 34"><path d="M2.7 3.6 Q2.7 2.8 3.5 2.8 H7.3 Q7.9 2.8 8.3 3.3 L8.9 3.9 H13.4 Q14.1 3.9 14.1 4.6 V4.9 H2.7 Z" fill="#0a0a0a"/><rect x="2.7" y="6.1" width="11.4" height="7.9" rx="0.9" fill="#0a0a0a"/><circle cx="22.5" cy="8.4" r="5.05" fill="none" stroke="#0a0a0a" stroke-width="1.25"/><path d="M20.7 7.4 L22.5 8.7 L24.8 6.1" stroke="#0a0a0a" stroke-width="1.45" fill="none"/><path d="M41.6 9.7 L36.9 13.6 a3.5 3.5 0 0 1 -4.9 -4.9 L37.4 3.3 a2.9 2.9 0 0 1 4.2 4 L36.5 12 a1.55 1.55 0 0 1 -2.4 -2 L38.2 5.7" fill="none" stroke="#0a0a0a" stroke-width="1.15" stroke-linecap="round"/><path d="M7.6 19.4 H3.9 Q2.9 19.4 2.9 20.4 V27.3 M6.2 30.5 H13 Q14 30.5 14 29.5 V23.4" fill="none" stroke="#8e8e8e" stroke-width="1"/><path d="M3.1 29.9 L4.7 26.4 L11.6 19.3 L13.9 21.3 L6.6 28.6 Z" fill="#0a0a0a"/><path d="M7 22.9 L9.3 20.4 Q10.3 19.6 11.1 20.5" fill="none" stroke="#0a0a0a" stroke-width="0.9"/><path d="M4.8 26.6 L6.4 28.2" stroke="#fafafa" stroke-width="0.55"/></svg>
<svg class="b" id="gantt" style="left:401px;top:188px" width="1290" height="746" viewBox="401 188 1290 746">
<path d="M413.6 240.10 L407 244.00 L413.6 247.90 M420.8 240.10 L414.2 244.00 L420.8 247.90" fill="none" stroke="#1763e2" stroke-width="1.3"/>
<path d="M413.6 269.98 L407 273.88 L413.6 277.77 M420.8 269.98 L414.2 273.88 L420.8 277.77" fill="none" stroke="#1763e2" stroke-width="1.3"/>
<path d="M413.6 292.73 L407 296.62 L413.6 300.52 M420.8 292.73 L414.2 296.62 L420.8 300.52" fill="none" stroke="#1763e2" stroke-width="1.3"/>
<path d="M413.6 315.48 L407 319.38 L413.6 323.27 M420.8 315.48 L414.2 319.38 L420.8 323.27" fill="none" stroke="#1763e2" stroke-width="1.3"/>
<path d="M413.6 338.23 L407 342.12 L413.6 346.02 M420.8 338.23 L414.2 342.12 L420.8 346.02" fill="none" stroke="#1763e2" stroke-width="1.3"/>
<path d="M413.6 360.98 L407 364.88 L413.6 368.77 M420.8 360.98 L414.2 364.88 L420.8 368.77" fill="none" stroke="#1763e2" stroke-width="1.3"/>
<path d="M413.6 383.73 L407 387.62 L413.6 391.52 M420.8 383.73 L414.2 387.62 L420.8 391.52" fill="none" stroke="#1763e2" stroke-width="1.3"/>
<path d="M413.6 406.48 L407 410.38 L413.6 414.27 M420.8 406.48 L414.2 410.38 L420.8 414.27" fill="none" stroke="#1763e2" stroke-width="1.3"/>
<path d="M413.6 429.23 L407 433.12 L413.6 437.02 M420.8 429.23 L414.2 433.12 L420.8 437.02" fill="none" stroke="#1763e2" stroke-width="1.3"/>
<path d="M413.6 451.98 L407 455.88 L413.6 459.77 M420.8 451.98 L414.2 455.88 L420.8 459.77" fill="none" stroke="#1763e2" stroke-width="1.3"/>
<path d="M413.6 474.73 L407 478.62 L413.6 482.52 M420.8 474.73 L414.2 478.62 L420.8 482.52" fill="none" stroke="#1763e2" stroke-width="1.3"/>
<path d="M413.6 497.48 L407 501.38 L413.6 505.27 M420.8 497.48 L414.2 501.38 L420.8 505.27" fill="none" stroke="#1763e2" stroke-width="1.3"/>
<path d="M413.6 520.23 L407 524.12 L413.6 528.02 M420.8 520.23 L414.2 524.12 L420.8 528.02" fill="none" stroke="#1763e2" stroke-width="1.3"/>
<path d="M413.6 542.98 L407 546.88 L413.6 550.77 M420.8 542.98 L414.2 546.88 L420.8 550.77" fill="none" stroke="#1763e2" stroke-width="1.3"/>
<path d="M413.6 565.73 L407 569.62 L413.6 573.52 M420.8 565.73 L414.2 569.62 L420.8 573.52" fill="none" stroke="#1763e2" stroke-width="1.3"/>
<path d="M395 199.5 H1661 Q1664 199.5 1664 202.5 V205.6 L1658.7 210.8 L1653.5 205.6 H395 Z" fill="#cfe0f9" stroke="#1f6fc2" stroke-width="1.05" stroke-linejoin="round"/>
<rect x="390" y="584.4" width="205.8" height="15.2" rx="3" fill="#cfe0f9" stroke="#1f6fc2" stroke-width="1.05"/>
<path d="M596.4 591.2 H603.4 Q605.9 591.2 605.9 593.7 V603" fill="none" stroke="#444" stroke-width="1"/><path d="M603.2 602.6 H608.6 L605.9 608 Z" fill="#111"/>
<path d="M593 608.6 H1661 Q1664 608.6 1664 611.6 V614.8 L1658.7 620 L1653.5 614.8 H600.6 L595.6 619.8 L590.4 614.8 V611.6 Q590.4 608.6 593.4 608.6 Z" fill="#cfe0f9" stroke="#1f6fc2" stroke-width="1.05" stroke-linejoin="round"/>
<rect x="595.9" y="629.6" width="151.4" height="15.2" rx="3" fill="#cfe0f9" stroke="#1f6fc2" stroke-width="1.05"/>
<path d="M748 637.5 H883.5 Q886 637.5 886 640 V672 Q886 674.5 888.5 674.5 H894" fill="none" stroke="#555" stroke-width="1"/><path d="M893.6 671.8 V677.2 L899 674.5 Z" fill="#111"/>
<rect x="899.7" y="667" width="151.4" height="15.2" rx="3" fill="#cfe0f9" stroke="#1f6fc2" stroke-width="1.05"/>
<path d="M1051.8 674.5 H1340 Q1342.5 674.5 1342.5 677 V709.7 Q1342.5 712.2 1345 712.2 H1349.5" fill="none" stroke="#555" stroke-width="1"/><path d="M1349 709.5 V714.9 L1354.4 712.2 Z" fill="#111"/>
<rect x="1354.7" y="704.6" width="151.8" height="15.8" rx="3" fill="#cfe0f9" stroke="#1f6fc2" stroke-width="1.05"/>
<path d="M1507 712.2 H1514 Q1516.5 712.2 1516.5 714.7 V720.7 Q1516.5 723.2 1514 723.2 H1489 Q1486.5 723.2 1486.5 725.7 V732.7 Q1486.5 735.2 1489 735.2 H1494" fill="none" stroke="#555" stroke-width="1"/><path d="M1493.4 732.5 V737.9 L1498.8 735.2 Z" fill="#111"/>
<path d="M1506.7 727.6 L1514.3 735.2 L1506.7 742.8 L1499.1 735.2 Z" fill="#cfe0f9" fill-opacity="0.82" stroke="#1f6fc2" stroke-width="1.1"/>
<path d="M1514.6 735.2 H1522 Q1524.5 735.2 1524.5 737.7 V745" fill="none" stroke="#555" stroke-width="1"/><path d="M1521.8 744.4 H1527.2 L1524.5 749.8 Z" fill="#111"/>
<rect x="1506.3" y="750.2" width="152.3" height="15.8" rx="2.5" fill="#ede683"/>
<path d="M1658.8 757.9 H1666 Q1668.5 757.9 1668.5 760.4 V766.9 Q1668.5 769.4 1666 769.4 H1640.8 Q1638.3 769.4 1638.3 771.9 V777.8 Q1638.3 780.3 1640.8 780.3 H1646" fill="none" stroke="#555" stroke-width="1"/><path d="M1645.4 777.6 V783 L1650.8 780.3 Z" fill="#111"/>
<path d="M1658.5 772.7 L1666.1 780.3 L1658.5 787.9 L1650.9 780.3 Z" fill="#cfe0f9" fill-opacity="0.82" stroke="#1f6fc2" stroke-width="1.1"/>
</svg>
<div class="t " style="top:631px;font-size:10.5px;line-height:12px;color:#000;letter-spacing:0px;font-weight:bold;-webkit-text-stroke:0;left:598.00px;">20 min</div>
<div class="b" style="left:900px;top:668px;width:148px;height:14px;overflow:hidden"><div class="t" style="left:2px;top:1px;font-size:10.5px;line-height:12px;font-weight:bold;-webkit-text-stroke:0;color:#000;white-space:nowrap">30 min easy, inc a few strides</div></div>
<div class="t " style="top:706px;font-size:10.5px;line-height:12px;color:#000;letter-spacing:0px;font-weight:bold;-webkit-text-stroke:0;left:1357.20px;">20 mins</div>
<div class="t " style="top:752px;font-size:10.5px;line-height:12px;color:#000;letter-spacing:0px;font-weight:bold;-webkit-text-stroke:0;left:1509.00px;">5 h Marathon</div>
</div>
</div>
</body></html>
